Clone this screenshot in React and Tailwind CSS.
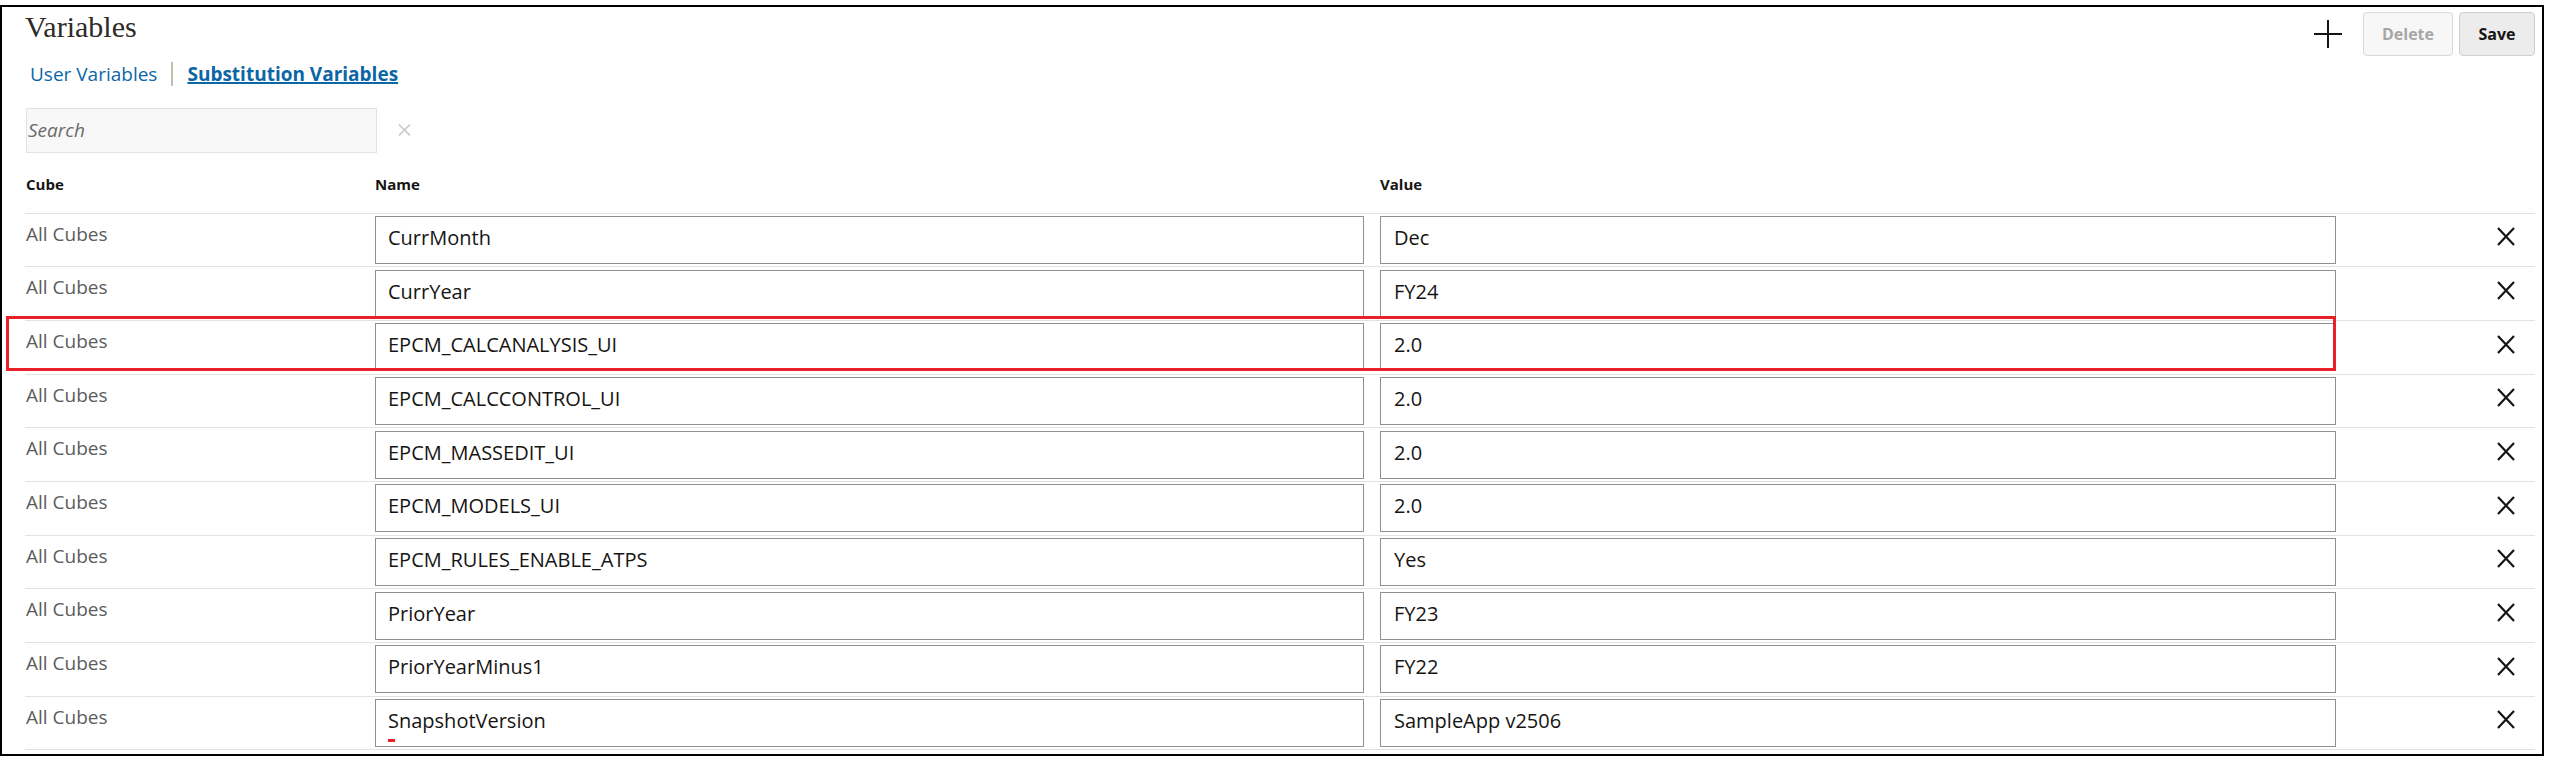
import React from 'react';

const rows = [
  { name: 'CurrMonth', value: 'Dec' },
  { name: 'CurrYear', value: 'FY24' },
  { name: 'EPCM_CALCANALYSIS_UI', value: '2.0', flagged: true },
  { name: 'EPCM_CALCCONTROL_UI', value: '2.0' },
  { name: 'EPCM_MASSEDIT_UI', value: '2.0' },
  { name: 'EPCM_MODELS_UI', value: '2.0' },
  { name: 'EPCM_RULES_ENABLE_ATPS', value: 'Yes' },
  { name: 'PriorYear', value: 'FY23' },
  { name: 'PriorYearMinus1', value: 'FY22' },
  { name: 'SnapshotVersion', value: 'SampleApp v2506', spell: true },
];

const PlusIcon = () => (
  <svg width="28" height="28" viewBox="0 0 28 28" fill="none">
    <path d="M14 0V28M0 14H28" stroke="#161513" strokeWidth="2" />
  </svg>
);

const RemoveIcon = () => (
  <svg width="18" height="19" viewBox="0 0 18 19" fill="none">
    <path d="M1 1L17 18M17 1L1 18" stroke="#161513" strokeWidth="2.2" />
  </svg>
);

const ClearIcon = () => (
  <svg width="13" height="12" viewBox="0 0 13 12" fill="none">
    <path d="M1 0.5L12 11.5M12 0.5L1 11.5" stroke="#c6c6c6" strokeWidth="1.5" />
  </svg>
);

const VariableRow = ({ row }) => (
  <div className="relative grid grid-cols-[350px_1005px_956px_1fr] h-[53.66px] border-b border-[#e2e2e2]">
    {/* annotation frame around the selected row */}
    {row.flagged && (
      <div className="absolute z-10 left-[-19px] top-[-4.6px] w-[2330px] h-[54.3px] border-[3px] border-[#e8202a] pointer-events-none" />
    )}
    <div className="pt-[8px] pl-[1px] text-[19px] leading-[24px] text-[#5c5c5c]">All Cubes</div>
    <div className="flex items-center">
      <div className="relative w-[989px]">
        <input
          readOnly
          defaultValue={row.name}
          className="w-full h-[48px] border border-[#909090] bg-white pl-[12px] pb-[5px] text-[20px] text-[#161513] outline-none font-['Open_Sans',sans-serif]"
        />
        {row.spell && <span className="absolute left-[12.5px] top-[40.4px] w-[7px] h-[3px] bg-[#e8202a]" />}
      </div>
    </div>
    <div className="flex items-center">
      <input
        readOnly
        defaultValue={row.value}
        className="w-full h-[48px] border border-[#909090] bg-white pl-[13px] pb-[5px] text-[20px] text-[#161513] outline-none font-['Open_Sans',sans-serif]"
      />
    </div>
    <div className="flex justify-end pr-[20px] pt-[13.6px]">
      <button className="h-[19px]">
        <RemoveIcon />
      </button>
    </div>
  </div>
);

export default function App() {
  return (
    <div className="w-[2554px] h-[761px] bg-white pt-[5px] font-['Open_Sans',sans-serif]">
      <div className="w-[2544px] h-[751px] border-2 border-black pl-[23px] pr-[7px]">
        {/* title + actions */}
        <div className="flex items-start justify-between">
          <h1 className="mt-[2.6px] text-[30px] leading-[34px] text-[#2e2a27] font-['Liberation_Serif',serif] font-normal">
            Variables
          </h1>
          <div className="flex items-center mt-[5.3px]">
            <button className="mr-[20.6px] flex items-center">
              <PlusIcon />
            </button>
            <button
              disabled
              className="h-[44px] w-[90px] rounded-[4px] border border-[#d9d9d9] bg-[#f7f7f7] text-[16px] font-bold text-[#a6a6a6]"
            >
              Delete
            </button>
            <button className="ml-[6px] h-[44px] w-[76px] rounded-[4px] border border-[#cfcfcf] bg-[#ececec] text-[16px] font-bold text-[#161513]">
              Save
            </button>
          </div>
        </div>

        {/* tabs */}
        <div className="mt-[5.35px] ml-[5px] flex items-center text-[19px] leading-[24px]">
          <span className="text-[#0b66a6]">User Variables</span>
          <span className="mx-[14px] h-[24px] w-[2px] bg-[#c4bcb0]" />
          <span className="text-[19px] font-bold text-[#0b66a6] underline decoration-2 underline-offset-[1px]">
            Substitution Variables
          </span>
        </div>

        {/* search */}
        <div className="mt-[22.35px] ml-[1px] flex items-center gap-[21px]">
          <input
            placeholder="Search"
            className="h-[45px] w-[351px] border border-[#e2e2e2] bg-[#f8f8f8] pl-[1px] text-[19px] italic text-[#161513] placeholder:text-[#6b6b6b] outline-none font-['Open_Sans',sans-serif]"
          />
          <ClearIcon />
        </div>

        {/* column headers */}
        <div className="mt-[21.2px] grid grid-cols-[350px_1005px_956px_1fr] h-[39.5px] border-b border-[#e2e2e2] text-[15px] leading-[20px] font-bold text-[#161513]">
          <div className="pl-[1px]">Cube</div>
          <div>Name</div>
          <div>Value</div>
          <div />
        </div>

        {rows.map((row) => (
          <VariableRow key={row.name} row={row} />
        ))}
      </div>
    </div>
  );
}
